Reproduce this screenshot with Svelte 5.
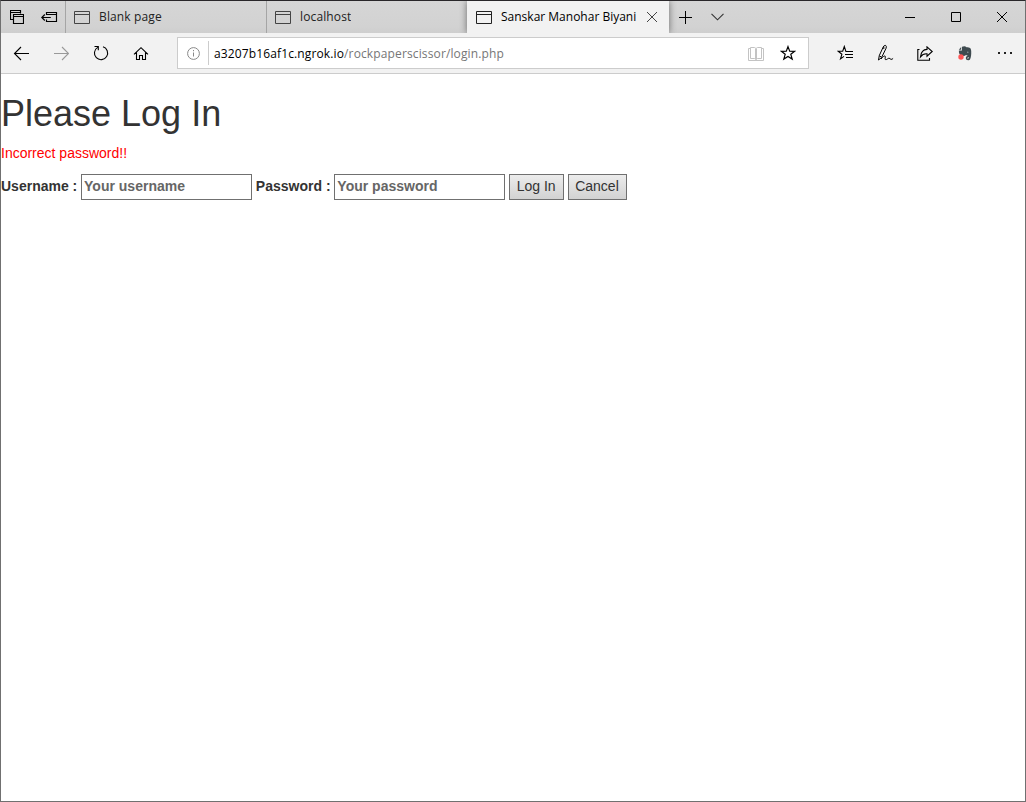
<script>
  const tabs = [
    { title: 'Blank page', active: false },
    { title: 'localhost', active: false },
    { title: 'Sanskar Manohar Biyani', active: true }
  ];
</script>

{#snippet pageIcon()}
  <svg class="page-icon" width="16" height="13" viewBox="0 0 16 13">
    <path d="M.5.5h15v12H.5zM.5 3.5h15" />
  </svg>
{/snippet}

<div class="window">
  <header class="tabstrip">
    <div class="tab-actions">
      <svg width="14" height="14" viewBox="0 0 14 14">
        <path stroke-width="1.150" d="M3 9.500H.5v-9h10v3M.5 2.500h10M3.500 4.500h10v9h-10zM3.500 6.500h10" />
      </svg>
      <svg width="17" height="12" viewBox="0 0 17 12">
        <path stroke-width="1.150" d="M5.500 4V1.500h10v9h-10V8.500M5.500 3.500h10M.8 6.500h9M3.800 3.500l-3 3 3 3" />
      </svg>
    </div>
    {#each tabs as tab}
      <div class="tab" class:active={tab.active}>
        {@render pageIcon()}
        <span class="title">{tab.title}</span>
        {#if tab.active}
          <svg class="close" width="12" height="12" viewBox="0 0 12 12"><path d="M1 1l10 10M11 1L1 11" /></svg>
        {/if}
      </div>
    {/each}
    <div class="new-tab">
      <svg width="14" height="14" viewBox="0 0 14 14"><path d="M0 7.500h13M6.500 1v13" /></svg>
      <svg class="chevron" width="14" height="8" viewBox="0 0 14 8"><path d="M.5.8l6 6 6-6" /></svg>
    </div>
    <div class="controls">
      <svg width="12" height="12" viewBox="0 0 12 12"><path d="M1 6.500h10" /></svg>
      <svg width="12" height="12" viewBox="0 0 12 12"><path d="M1.500 1.500h9v9h-9z" /></svg>
      <svg width="12" height="12" viewBox="0 0 12 12"><path d="M1 1l10 10M11 1L1 11" /></svg>
    </div>
  </header>

  <nav class="toolbar">
    <div class="navigation">
      <svg width="16" height="15" viewBox="0 0 16 15"><path d="M1.500 7.500H16M8 1L1.500 7.500 8 14" /></svg>
      <svg class="disabled" width="16" height="15" viewBox="0 0 16 15"><path d="M1 7.500h14.500M9 1l6.500 6.500L9 14" /></svg>
      <svg width="16" height="16" viewBox="0 0 16 16"><path d="M10 1.800a6.600 6.600 0 1 1-5.300.6M1.500 1.500h3.800v3.800" /></svg>
      <svg width="16" height="15" viewBox="0 0 16 15"><path d="M1 8.300l7-6.600 7 6.600M3.500 6.500v7h3v-4h3v4h3v-7" /></svg>
    </div>
    <div class="address">
      <svg class="info" width="13" height="13" viewBox="0 0 13 13">
        <circle cx="6.500" cy="6.500" r="5.900" /><path d="M6.500 5.500v4M6.500 3v1.200" />
      </svg>
      <span class="divider"></span>
      <span class="url"><b>a3207b16af1c.ngrok.io</b>/rockpaperscissor/login.php</span>
      <svg class="book" width="16" height="14" viewBox="0 0 16 14">
        <path d="M2.500 1.500h-2v12h15v-12h-2M7.500 12.500V1.500q0-1-1-1h-4v11h4q1 0 1 1zM8.500 12.500V1.500q0-1 1-1h4v11h-4q-1 0-1 1z" />
      </svg>
      <svg class="star" width="16" height="16" viewBox="0 0 16 16">
        <path d="M8 1.600l1.700 4.600 5 .1-3.900 3 1.400 4.800L8 11.400l-4.200 2.700 1.400-4.800-3.900-3 5-.1z" />
      </svg>
    </div>
    <div class="tools">
      <svg width="17" height="16" viewBox="0 0 17 16">
        <path stroke-width="1.100" d="M10 6.500H8.900L7.300 1.500 5.700 6.200H1.200l3.700 3-1.400 4.700L7 11.400M9 6.500h7M8 9.500h8M9 12.500h7" />
      </svg>
      <svg width="17" height="18" viewBox="0 0 17 18">
        <path d="M1.500 16l.8-4.500L6.200 3q1.200-2.200 2.400-1.600 1.200.8.500 2.800L4.600 13.500 1.500 16M2.300 11.800l2.300 1.400M6.800 2.500v2.500M4 15c2-2.300 3.500-3.600 4.200-2.800.6.900-1 3.500.6 3.500 1.400 0 2-1.500 3.300-1.500 1 0 1 1.200 2 1.200.8 0 1.300-.4 2-1" />
      </svg>
      <svg width="17" height="15" viewBox="0 0 17 15">
        <path stroke-width="1.100" d="M2.500 3.500H.8v10.700h11.700V12M10 .8l5.200 4.700L10 10.200V7.800C7 7.600 5.200 8.500 3.500 10.800 4 6.200 6.200 3.600 10 3.400z" />
      </svg>
      <svg class="elephant" width="14" height="15" viewBox="0 0 14 15">
        <path d="M4 .8c1.800-.8 3.500-.7 4.500.4 3.500 0 4.500.8 4.700 3.800.2 3.600-.2 6.500-1.100 8.200-.9 1.600-4.300 1.500-4.300-1.100 0-1.700 1.200-2.300 2.800-2v1.300c-1-.1-1.300.1-1.300.8 0 .7 1.400.8 1.700-.7-.3-1.500-1.600-1.800-3-2.500-1.300 1.500-3.200 1-4.800.5C1.500 9 .7 7 .9 4.500H4z" />
        <path d="M3.200 1v2.800H.8z" />
        <circle class="eye" cx="9.800" cy="6.200" r=".8" />
        <circle class="badge" cx="3" cy="11" r="2.700" />
      </svg>
      <svg class="dots" width="16" height="4" viewBox="0 0 16 4">
        <path d="M1 1h2v2H1zM7 1h2v2H7zM13 1h2v2h-2z" />
      </svg>
    </div>
  </nav>

  <main>
    <h1>Please Log In</h1>
    <p>Incorrect password!!</p>
    <form>
      <label for="username">Username :</label>
      <input id="username" type="text" placeholder="Your username" />
      <label for="password">Password :</label>
      <input id="password" type="password" placeholder="Your password" />
      <button class="login" type="button">Log In</button>
      <button class="cancel" type="button">Cancel</button>
    </form>
  </main>
</div>

<style>
  :global(body) { margin: 0; overflow: hidden; }
  .window {
    box-sizing: border-box;
    width: 1026px;
    height: 802px;
    border: 1px solid #707070;
    border-top-color: #29272a;
    background: #fff;
    display: flex;
    flex-direction: column;
    font-family: "Open Sans", "Noto Sans", sans-serif;
    font-size: 12px;
    letter-spacing: .13px;
    color: #000;
  }
  svg { display: block; flex: none; fill: none; stroke: #000; stroke-width: 1; }
  .tabstrip {
    display: flex;
    height: 32px;
    flex: none;
    background: linear-gradient(#d6d6d6, #d2d2d2 80%, #cecece);
  }
  .tab-actions {
    display: flex;
    align-items: center;
    width: 64px;
    box-sizing: border-box;
    padding-left: 9px;
    gap: 17px;
  }
  .tab {
    display: flex;
    align-items: center;
    box-sizing: border-box;
    width: 201px;
    border-left: 1px solid #a5a5a5;
    padding-left: 8px;
    color: #222;
  }
  .tab.active {
    width: 202px;
    border: 0;
    padding-left: 9px;
    background: #f2f2f2;
    box-shadow: 0 0 7px rgba(0, 0, 0, .5);
    clip-path: inset(0 -8px 0 -8px);
    color: #000;
  }
  .page-icon { stroke: #444; }
  .active .page-icon { stroke: #222; }
  .title { margin-left: 9px; white-space: nowrap; overflow: hidden; line-height: 18px; }
  .active .title { width: 136px; letter-spacing: 0; }
  .close { margin-left: 9px; stroke: #444; }
  .new-tab { display: flex; align-items: center; padding-left: 10px; gap: 18px; }
  .chevron { stroke: #333; stroke-width: 1.1; }
  .controls { display: flex; align-items: center; gap: 34px; margin-left: auto; padding-right: 17px; }
  .toolbar {
    display: flex;
    align-items: center;
    height: 40px;
    flex: none;
    background: #f2f2f2;
    border-bottom: 1px solid #ccc;
  }
  .navigation { display: flex; align-items: center; gap: 24px; padding-left: 12px; width: 164px; }
  .navigation svg { stroke-width: 1.1; }
  .navigation .disabled { stroke: #999; }
  .address {
    box-sizing: border-box;
    width: 632px;
    height: 32px;
    border: 1px solid #ccc;
    background: #fff;
    display: flex;
    align-items: center;
    padding: 0 12px 0 9px;
  }
  .info { stroke: #888; }
  .divider { width: 1px; height: 24px; background: #ccc; margin: 0 5px 0 8px; }
  .url { flex: 1; color: #767676; white-space: nowrap; line-height: 18px; padding-top: 2px; }
  .url b { font-weight: 400; color: #000; }
  .book { stroke: #c3c3c3; margin: 2px 16px 0 0; }
  .star { stroke-width: 1.2; }
  .tools { display: flex; align-items: center; margin-left: 28px; gap: 23px; }
  .tools .elephant { stroke: none; fill: #3f4b50; margin-left: 1px; }
  .elephant .eye { fill: #8a9396; }
  .elephant .badge { fill: #ff5454; }
  .tools .dots { stroke: none; fill: #222; margin-left: 2px; }
  main {
    flex: 1;
    padding-top: 20px;
    font-family: "Liberation Sans", Arial, sans-serif;
    font-size: 14px;
    letter-spacing: 0;
    line-height: 20px;
    color: #333;
  }
  h1 { font-size: 36px; font-weight: 400; line-height: 40px; margin: 0 0 9px; }
  p { margin: 0 0 11px; color: #f00; }
  form { display: flex; align-items: center; gap: 3.8px; }
  label { font-weight: 700; white-space: nowrap; margin-top: -2px; }
  input {
    box-sizing: border-box;
    width: 171px;
    height: 26px;
    border: 1px solid #707070;
    border-radius: 0;
    padding: 0 2px 2px;
    font: 700 14px "Liberation Sans", Arial, sans-serif;
    background: #fff;
  }
  input::placeholder { color: #666; opacity: 1; }
  button {
    box-sizing: border-box;
    height: 26px;
    border: 1px solid #707070;
    border-radius: 0;
    padding: 0 1px 2px 0;
    background: linear-gradient(#ececec, #d2d2d2);
    color: #333;
    font: 14px "Liberation Sans", Arial, sans-serif;
  }
  .login { width: 55px; }
  .cancel { width: 59px; }
</style>
